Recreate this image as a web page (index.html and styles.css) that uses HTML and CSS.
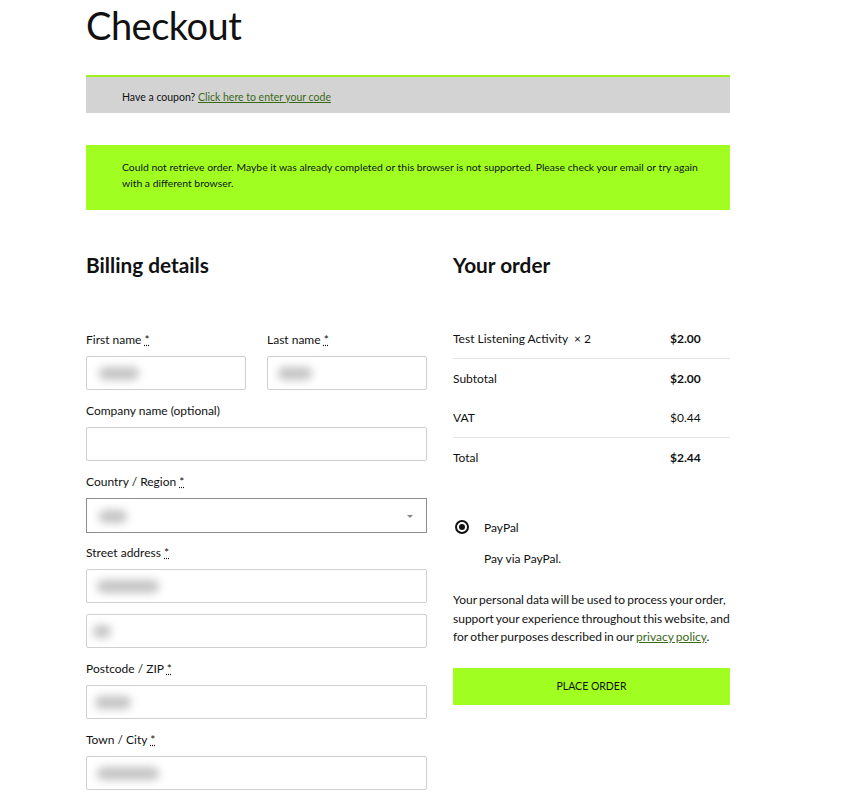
FILE: index.html
```html
<!DOCTYPE html>
<html lang="en">
<head>
<meta charset="utf-8">
<title>Checkout</title>
<link rel="stylesheet" href="styles.css">
</head>
<body>
<main class="page">
  <h1 class="title">Checkout</h1>
  <div class="coupon">Have a coupon? <a href="#">Click here to enter your code</a></div>
  <div class="notice">Could not retrieve order. Maybe it was already completed or this browser is not supported. Please check your email or try again with a different browser.</div>
  <div class="columns">
    <section class="billing">
      <h2 class="heading heading-billing">Billing details</h2>
      <div class="fields">
        <div class="row-2">
          <div class="field">
            <label class="label">First name <abbr>*</abbr></label>
            <div class="input"><span class="blur blur-a"></span></div>
          </div>
          <div class="field">
            <label class="label">Last name <abbr>*</abbr></label>
            <div class="input"><span class="blur blur-b"></span></div>
          </div>
        </div>
        <div class="field">
          <label class="label">Company name (optional)</label>
          <div class="input"></div>
        </div>
        <div class="field field-select">
          <label class="label">Country / Region <abbr>*</abbr></label>
          <div class="input select"><span class="blur blur-c"></span><span class="arrow"></span></div>
        </div>
        <div class="field">
          <label class="label">Street address <abbr>*</abbr></label>
          <div class="input"><span class="blur blur-d"></span></div>
          <div class="input input-extra"><span class="blur blur-e"></span></div>
        </div>
        <div class="field">
          <label class="label">Postcode / ZIP <abbr>*</abbr></label>
          <div class="input"><span class="blur blur-f"></span></div>
        </div>
        <div class="field field-last">
          <label class="label">Town / City <abbr>*</abbr></label>
          <div class="input"><span class="blur blur-d"></span></div>
        </div>
      </div>
    </section>
    <section class="order">
      <h2 class="heading heading-order">Your order</h2>
      <div class="order-table">
        <div class="order-row line">
          <span>Test Listening Activity &nbsp;<span class="qty">× 2</span></span>
          <strong class="amount">$2.00</strong>
        </div>
        <div class="order-row">
          <span>Subtotal</span>
          <strong class="amount">$2.00</strong>
        </div>
        <div class="order-row line">
          <span>VAT</span>
          <span class="amount">$0.44</span>
        </div>
        <div class="order-row">
          <span>Total</span>
          <strong class="amount">$2.44</strong>
        </div>
      </div>
      <div class="payment">
        <div class="method"><span class="radio"></span><span>PayPal</span></div>
        <p class="method-desc">Pay via PayPal.</p>
      </div>
      <p class="privacy">Your personal data will be used to process your order, support your experience throughout this website, and for other purposes described in our <a href="#">privacy policy</a>.</p>
      <button class="place-order" type="button">PLACE ORDER</button>
    </section>
  </div>
</main>
</body>
</html>
```
FILE: styles.css
```css
* { box-sizing: border-box; }
html, body { margin: 0; padding: 0; background: #fff; }
body {
  font-family: "Lato", "Open Sans", sans-serif;
  color: #111;
  font-size: 12px;
}
.page {
  width: 644px;
  margin-left: 86px;
}
.title {
  margin: 0;
  font-size: 38px;
  font-weight: 400;
  line-height: 50px;
  height: 75px;
  letter-spacing: -0.5px;
}
.coupon {
  height: 38px;
  background: #d3d3d3;
  border-top: 2px solid #9ef01f;
  padding: 2px 36px 0;
  line-height: 36px;
  font-size: 10.5px;
}
.coupon a, .privacy a { color: #3a6a16; }
.notice {
  margin-top: 32px;
  height: 65px;
  background: #a0ff20;
  padding: 14px 24px 0 36px;
  font-size: 10.4px;
  line-height: 16px;
}
.columns {
  display: flex;
  gap: 26px;
  margin-top: 40px;
}
.billing { width: 341px; }
.order { width: 277px; }
.heading {
  margin: 0;
  font-size: 20.8px;
  font-weight: 700;
  line-height: 30px;
}
.heading-billing { height: 81px; }
.heading-order { height: 69px; }
.fields { display: flex; flex-direction: column; }
.row-2 { display: flex; gap: 21px; }
.row-2 .field { flex: 1; }
.field { margin-bottom: 12px; }
.field-select { margin-bottom: 11px; }
.field-last { margin-bottom: 0; }
.label {
  display: block;
  font-size: 12px;
  line-height: 18px;
  margin-bottom: 7px;
}
.label abbr { text-decoration: underline dotted; cursor: help; }
.input {
  position: relative;
  height: 34px;
  border: 1px solid #cfcfcf;
  border-radius: 2px;
  background: #fff;
  overflow: hidden;
}
.input-extra { margin-top: 11px; }
.select { height: 35px; border-color: #8d8d8d; border-radius: 0; }
.blur {
  position: absolute;
  top: 10px;
  left: 8px;
  height: 13px;
  background: #c4c4c4;
  border-radius: 6px;
  filter: blur(4px);
}
.blur-a { width: 40px; left: 12px; }
.blur-b { width: 34px; left: 10px; }
.blur-c { width: 28px; left: 12px; top: 11px; }
.blur-d { width: 62px; left: 10px; }
.blur-e { width: 18px; left: 6px; }
.blur-f { width: 36px; left: 8px; }
.arrow {
  position: absolute;
  right: 13px;
  top: 16px;
  border-left: 3px solid transparent;
  border-right: 3px solid transparent;
  border-top: 3px solid #888;
}
.order-row {
  display: flex;
  height: 39.5px;
  align-items: center;
}
.order-row > span:first-child { width: 217px; }
.order-row.line { border-bottom: 1px solid #e4e4e4; }
.amount { font-weight: 700; }
span.amount { font-weight: 400; }
.payment { margin-top: 40px; }
.method { display: flex; align-items: center; gap: 15px; padding-left: 2px; height: 20px; }
.radio {
  width: 14px;
  height: 14px;
  border: 2px solid #111;
  border-radius: 50%;
  position: relative;
}
.radio::after {
  content: "";
  position: absolute;
  left: 2px;
  top: 2px;
  width: 6px;
  height: 6px;
  border-radius: 50%;
  background: #111;
}
.method-desc { margin: 12px 0 0 31px; line-height: 20px; }
.privacy {
  margin: 22px 0 0;
  line-height: 18.5px;
  font-size: 12px;
  word-spacing: -0.8px;
}
.place-order {
  display: block;
  width: 100%;
  margin-top: 21px;
  height: 37px;
  border: 0;
  background: #a0ff20;
  font-family: inherit;
  font-size: 10.5px;
  color: #111;
}
```
